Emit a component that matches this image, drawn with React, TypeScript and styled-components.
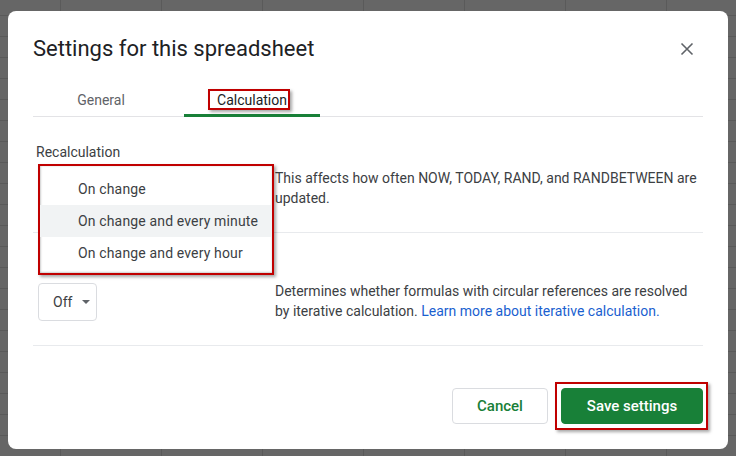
import * as React from "react"
import styled, { createGlobalStyle } from "styled-components"

const GlobalStyle = createGlobalStyle`
  html, body {
    margin: 0;
    padding: 0;
  }
  body {
    min-height: 456px;
    font-family: Roboto, "Liberation Sans", Arial, sans-serif;
    background-color: #666666;
    background-image:
      linear-gradient(to right, #5a5a5a 1px, transparent 1px),
      linear-gradient(to bottom, #5a5a5a 1px, transparent 1px);
    background-size: 101px 21px;
    background-position: 60px 15px;
  }
  #root {
    padding: 11px 0 0 8px;
  }
`

const Dialog = styled.div`
  position: relative;
  width: 720px;
  height: 438px;
  box-sizing: border-box;
  background: #fff;
  border-radius: 8px;
  display: flex;
  flex-direction: column;
  padding: 0 25px 25px;
`

const Header = styled.header`
  display: flex;
  align-items: center;
  justify-content: space-between;
  padding-top: 24px;
`

const Title = styled.h1`
  margin: 0;
  font-size: 22px;
  line-height: 28px;
  font-weight: 400;
  color: #202124;
`

const CloseButton = styled.button`
  width: 24px;
  height: 24px;
  padding: 0;
  margin: 0 4px 0 0;
  border: none;
  background: none;
  display: flex;
  align-items: center;
  justify-content: center;
  cursor: pointer;
`

const TabBar = styled.div`
  display: flex;
  gap: 15px;
  margin-top: 18px;
  border-bottom: 1px solid #e3e3e6;
`

const Tab = styled.div<{ $active?: boolean }>`
  width: 136px;
  box-sizing: border-box;
  padding: 9px 0 4px;
  margin-bottom: -1px;
  text-align: center;
  font-size: 14px;
  line-height: 20px;
  font-weight: 400;
  color: ${(p) => (p.$active ? "#202124" : "#5f6368")};
  border-bottom: 3px solid ${(p) => (p.$active ? "#188038" : "transparent")};
`

const Marked = styled.span<{ $l: number; $r: number; $t: number; $b: number }>`
  position: relative;
  &::after {
    content: "";
    position: absolute;
    left: ${(p) => -p.$l}px;
    right: ${(p) => -p.$r}px;
    top: ${(p) => -p.$t}px;
    bottom: ${(p) => -p.$b}px;
    border: 2px solid #c00000;
    box-shadow: 2px 2px 3px rgba(0, 0, 0, 0.35);
    pointer-events: none;
  }
`

const Section = styled.section<{ $top: number }>`
  padding: ${(p) => p.$top}px 0 24px 3px;
  border-bottom: 1px solid #e8eaed;
`

const Label = styled.div`
  font-size: 14px;
  line-height: 20px;
  color: #3c4043;
`

const Row = styled.div<{ $gap: number }>`
  display: grid;
  grid-template-columns: 239px 1fr;
  margin-top: ${(p) => p.$gap}px;
`

const Select = styled.div`
  display: inline-flex;
  align-items: center;
  gap: 10px;
  width: 59px;
  height: 38px;
  box-sizing: border-box;
  margin-left: 2px;
  padding-left: 14px;
  border: 1px solid #dadce0;
  border-radius: 4px;
  font-size: 14px;
  color: #3c4043;
`

const Caret = styled.span`
  width: 0;
  height: 0;
  border-left: 4px solid transparent;
  border-right: 4px solid transparent;
  border-top: 4px solid #5f6368;
`

const Description = styled.p<{ $shift?: number }>`
  margin: ${(p) => p.$shift ?? 0}px 0 0;
  font-size: 14px;
  line-height: 20px;
  color: #3c4043;
`

const Link = styled.a`
  color: #1a5fd0;
  text-decoration: none;
`

const Footer = styled.footer`
  margin-top: auto;
  display: flex;
  justify-content: flex-end;
  gap: 13px;
`

const Button = styled.button<{ $primary?: boolean }>`
  height: 36px;
  width: ${(p) => (p.$primary ? 142 : 96)}px;
  border-radius: 4px;
  font-family: Roboto, "Liberation Sans", Arial, sans-serif;
  font-size: 15px;
  font-weight: 500;
  cursor: pointer;
  border: 1px solid ${(p) => (p.$primary ? "#188038" : "#dadce0")};
  background: ${(p) => (p.$primary ? "#188038" : "#fff")};
  color: ${(p) => (p.$primary ? "#fff" : "#188038")};
`

const MenuFrame = styled.div`
  position: absolute;
  left: 30px;
  top: 153px;
  width: 236px;
  border: 2px solid #c00000;
  box-sizing: border-box;
  box-shadow: 2px 2px 3px rgba(0, 0, 0, 0.35);
`

const Menu = styled.ul`
  margin: 0;
  padding: 7px 0 4px;
  list-style: none;
  background: #fff;
  box-shadow: inset 1px 0 2px rgba(0, 0, 0, 0.15), inset 0 -1px 2px rgba(0, 0, 0, 0.15);
`

const MenuItem = styled.li<{ $hover?: boolean }>`
  height: 32px;
  display: flex;
  align-items: center;
  padding-left: 38px;
  font-size: 14px;
  letter-spacing: 0.15px;
  color: #3c4043;
  background: ${(p) => (p.$hover ? "#f1f3f4" : "transparent")};
`

const options = ["On change", "On change and every minute", "On change and every hour"]

export default function App() {
  return (
    <>
      <GlobalStyle />
      <Dialog>
        <Header>
          <Title>Settings for this spreadsheet</Title>
          <CloseButton aria-label="Close">
            <svg width="24" height="24" viewBox="0 0 24 24">
              <path d="M6.5 6.5l11 11M17.5 6.5l-11 11" stroke="#5f6368" strokeWidth="1.6" fill="none" />
            </svg>
          </CloseButton>
        </Header>

        <TabBar>
          <Tab>General</Tab>
          <Tab $active>
            <Marked $l={9} $r={3} $t={3} $b={2}>Calculation</Marked>
          </Tab>
        </TabBar>

        <Section $top={25}>
          <Label>Recalculation</Label>
          <Row $gap={6}>
            <div />
            <Description>
              This affects how often NOW, TODAY, RAND, and RANDBETWEEN are updated.
            </Description>
          </Row>
        </Section>

        {/* the iteration heading sits under the open menu, so only its space is kept */}
        <Section $top={50}>
          <Row $gap={0}>
            <div>
              <Select>
                Off
                <Caret />
              </Select>
            </div>
            <Description $shift={-2}>
              Determines whether formulas with circular references are resolved by iterative
              calculation. <Link href="#">Learn more about iterative calculation.</Link>
            </Description>
          </Row>
        </Section>

        <Footer>
          <Button>Cancel</Button>
          <Marked $l={6} $r={5} $t={6} $b={6}>
            <Button $primary>Save settings</Button>
          </Marked>
        </Footer>

        <MenuFrame>
          <Menu>
            {options.map((o, i) => (
              <MenuItem key={o} $hover={i === 1}>
                {o}
              </MenuItem>
            ))}
          </Menu>
        </MenuFrame>
      </Dialog>
    </>
  )
}
